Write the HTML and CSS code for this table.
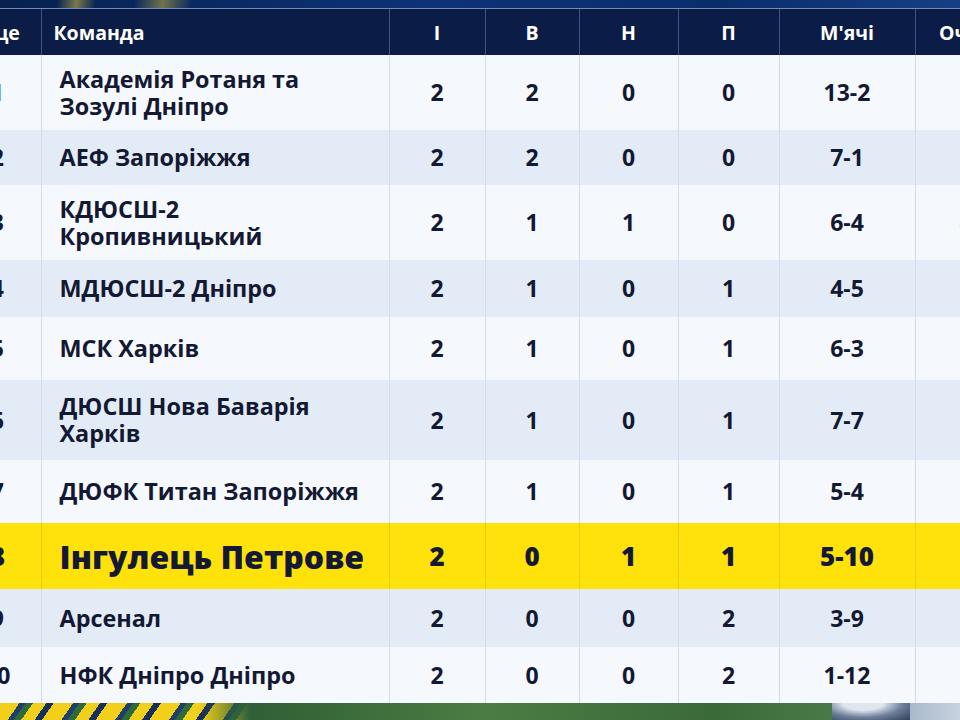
FILE: index.html
```html
<!DOCTYPE html>
<html lang="uk">
<head>
<meta charset="utf-8">
<title>Турнірна таблиця</title>
<link rel="stylesheet" href="styles.css">
</head>
<body>
<div class="top-strip"></div>
<div class="table-wrap">
<table class="standings">
<colgroup>
<col class="c-place"><col class="c-team"><col class="c-i"><col class="c-w"><col class="c-d"><col class="c-l"><col class="c-goals"><col class="c-pts">
</colgroup>
<thead>
<tr><th class="place-h">Місце</th><th class="team-h">Команда</th><th>І</th><th>В</th><th>Н</th><th>П</th><th>М'ячі</th><th>Очки</th></tr>
</thead>
<tbody>
<tr class="r-light"><td>1</td><td class="team">Академія Ротаня та<br>Зозулі Дніпро</td><td>2</td><td>2</td><td>0</td><td>0</td><td>13-2</td><td>6</td></tr>
<tr class="r-blue"><td>2</td><td class="team">АЕФ Запоріжжя</td><td>2</td><td>2</td><td>0</td><td>0</td><td>7-1</td><td>6</td></tr>
<tr class="r-light"><td>3</td><td class="team">КДЮСШ-2<br>Кропивницький</td><td>2</td><td>1</td><td>1</td><td>0</td><td>6-4</td><td>4</td></tr>
<tr class="r-blue"><td>4</td><td class="team">МДЮСШ-2 Дніпро</td><td>2</td><td>1</td><td>0</td><td>1</td><td>4-5</td><td>3</td></tr>
<tr class="r-light"><td>5</td><td class="team">МСК Харків</td><td>2</td><td>1</td><td>0</td><td>1</td><td>6-3</td><td>3</td></tr>
<tr class="r-blue"><td>6</td><td class="team">ДЮСШ Нова Баварія<br>Харків</td><td>2</td><td>1</td><td>0</td><td>1</td><td>7-7</td><td>3</td></tr>
<tr class="r-light"><td>7</td><td class="team">ДЮФК Титан Запоріжжя</td><td>2</td><td>1</td><td>0</td><td>1</td><td>5-4</td><td>3</td></tr>
<tr class="r-hl"><td>8</td><td class="team">Інгулець Петрове</td><td>2</td><td>0</td><td>1</td><td>1</td><td>5-10</td><td>1</td></tr>
<tr class="r-blue"><td>9</td><td class="team">Арсенал</td><td>2</td><td>0</td><td>0</td><td>2</td><td>3-9</td><td>0</td></tr>
<tr class="r-light"><td>10</td><td class="team">НФК Дніпро Дніпро</td><td>2</td><td>0</td><td>0</td><td>2</td><td>1-12</td><td>0</td></tr>
</tbody>
</table>
</div>
<div class="bottom-strip">
  <div class="streaks"></div>
  <div class="grass"></div>
  <div class="ball"></div>
  <div class="sky"></div>
</div>
</body>
</html>
```
FILE: styles.css
```css
html, body {
  margin: 0;
  padding: 0;
}
body {
  width: 960px;
  height: 720px;
  overflow: hidden;
  background: #0c2356;
  font-family: "Open Sans", "Noto Sans", "DejaVu Sans", sans-serif;
  color: #141933;
}
.top-strip {
  height: 8px;
  background:
    linear-gradient(100deg, transparent 0 6%, rgba(214,190,60,0.55) 8%, transparent 10%, transparent 14%, rgba(214,190,60,0.5) 17%, transparent 20%, transparent 100%),
    linear-gradient(90deg, #08214f 0%, #0d3276 45%, #0a2d6a 75%, #163f85 100%);
  border-bottom: 1px solid #6f8cc0;
}
.table-wrap {
  margin-left: -46px;
  width: 1080px;
}
.standings {
  border-collapse: collapse;
  table-layout: fixed;
  width: 1063px;
}
.c-place { width: 87px; }
.c-team { width: 348px; }
.c-i { width: 96px; }
.c-w { width: 94px; }
.c-d { width: 99px; }
.c-l { width: 101px; }
.c-goals { width: 136px; }
.c-pts { width: 102px; }

.standings th {
  height: 46px;
  padding: 0;
  background: #0b1d46;
  color: #ffffff;
  font-size: 19.5px;
  font-weight: 700;
  text-align: center;
  border-left: 1px solid #3d5482;
  box-sizing: border-box;
}
.standings th:first-child { border-left: 0; }
.standings th.place-h { padding-right: 14px; }
.standings th.team-h { text-align: left; padding-left: 12px; }

.standings td {
  padding: 0;
  text-align: center;
  font-size: 23px;
  font-weight: 700;
  line-height: 27px;
  border-left: 1px solid #d3dce8;
}
.standings td:first-child { border-left: 0; }
.standings td.team {
  text-align: left;
  padding-left: 18px;
  font-size: 23.4px;
}
.r-light { background: #f5f8fc; }
.r-blue { background: #e3ecf6; }
.r-hl { background: #ffe20c; }
.r-hl td {
  border-left-color: #e8cc0a;
  font-size: 26px;
  font-weight: 800;
}
.standings .r-hl td.team {
  font-size: 32px;
  font-weight: 800;
}

.standings tbody tr:nth-child(1) { height: 75px; }
.standings tbody tr:nth-child(2) { height: 55px; }
.standings tbody tr:nth-child(3) { height: 75px; }
.standings tbody tr:nth-child(4) { height: 57px; }
.standings tbody tr:nth-child(5) { height: 63px; }
.standings tbody tr:nth-child(6) { height: 80px; }
.standings tbody tr:nth-child(7) { height: 63px; }
.standings tbody tr:nth-child(8) { height: 66px; }
.standings tbody tr:nth-child(9) { height: 58px; }
.standings tbody tr:nth-child(10) { height: 56px; }

.bottom-strip {
  display: flex;
  height: 17px;
}
.streaks {
  width: 250px;
  background:
    linear-gradient(90deg, transparent 80%, #2f5f3a 100%),
    repeating-linear-gradient(125deg, #f2cf1a 0 16px, #1d3f6a 16px 21px, #2f6b3a 21px 27px, #f0d01c 27px 38px, #17305a 38px 44px);
}
.grass {
  flex: 1;
  background: linear-gradient(90deg, #2f5f34, #4b7d44 40%, #3b6a39 80%, #4a7a48);
}
.ball {
  width: 78px;
  background: radial-gradient(ellipse at 40% 0%, #dfe6ee 0 30%, #6d7f99 60%, #2f3f5c 100%);
}
.sky {
  width: 50px;
  background: linear-gradient(90deg, #a9b8cc, #c8d3e0);
}
```
